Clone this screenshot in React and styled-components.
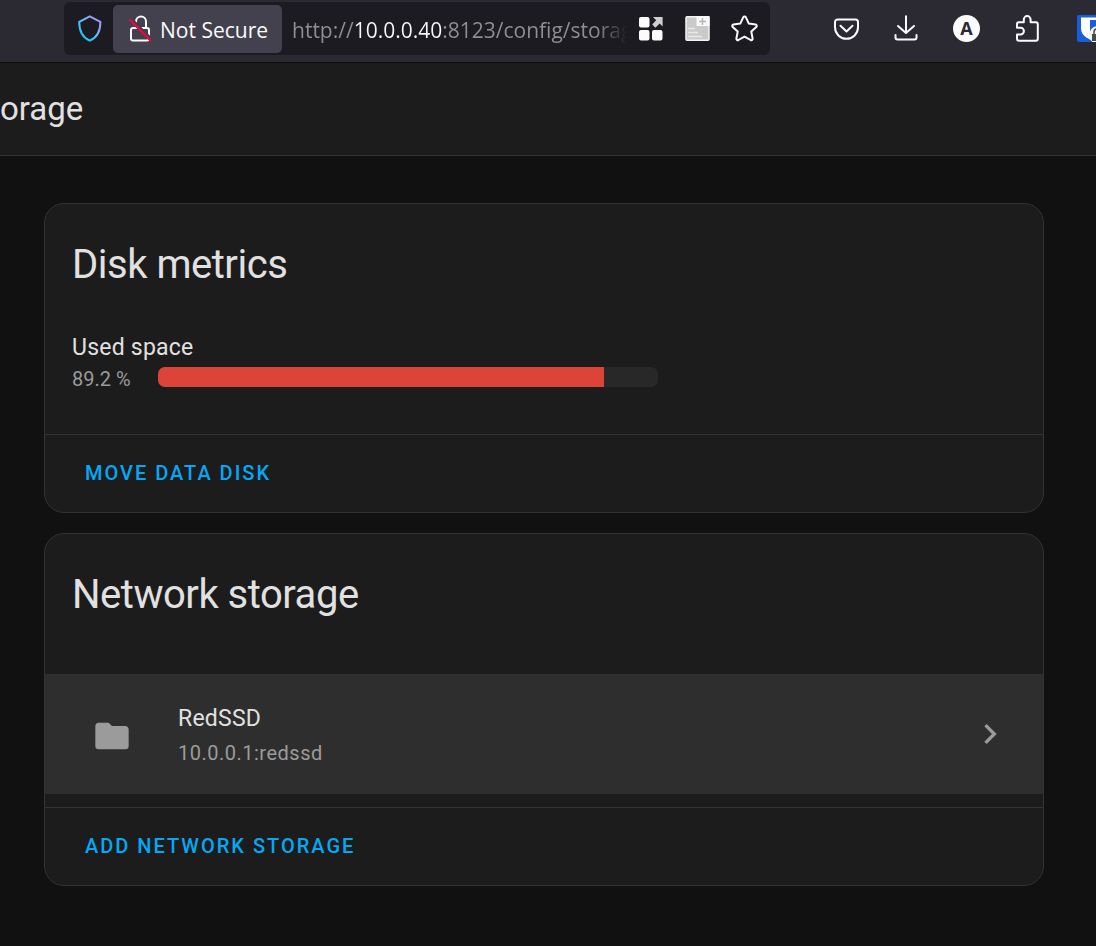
import React, { useState } from "react";
import styled, { createGlobalStyle } from "styled-components";

const GlobalStyle = createGlobalStyle`
  *, *::before, *::after { box-sizing: border-box; }
  body {
    margin: 0;
    background: #111111;
    color: #e1e1e1;
    font-family: Roboto, "Noto Sans", sans-serif;
    overflow-x: hidden;
  }
  button { border: 0; margin: 0; padding: 0; background: none; color: inherit; font: inherit; cursor: pointer; }
`;

const BrowserBar = styled.header`
  display: flex;
  height: 63px;
  padding: 2px 0 7px 64px;
  background: #2b2a33;
  border-bottom: 1px solid #0c0c0d;
  color: #fbfbfe;
  font-family: "Open Sans", "Noto Sans", sans-serif;
  font-size: 21px;
  overflow: hidden;
`;

const UrlBar = styled.div`
  display: flex;
  flex: 1;
  min-width: 0;
  align-items: center;
  padding-right: 12px;
  background: #1c1b22;
  border-radius: 6px;
`;

const IconButton = styled.button`
  display: flex;
  flex: none;
  svg { display: block; }
`;

const ShieldButton = styled(IconButton)`
  padding: 0 10px 0 12px;
`;

const IdentityButton = styled(IconButton)`
  align-items: center;
  gap: 7px;
  height: 48px;
  padding: 0 14px 0 13px;
  background: #42414d;
  border-radius: 5px;
  white-space: nowrap;
`;

const IdentityLabel = styled.span`
  padding-top: 2px;
`;

const UrlInput = styled.input`
  flex: 1;
  min-width: 0;
  height: 48px;
  margin: 0 10px;
  padding: 2px 0 0;
  border: 0;
  outline: 0;
  font: inherit;
  color: transparent;
  caret-color: #fbfbfe;
  background: linear-gradient(
    to right,
    #8f8f94 62px,
    #fbfbfe 62px,
    #fbfbfe 150px,
    #8f8f94 150px,
    #8f8f94 calc(100% - 30px),
    transparent
  );
  -webkit-background-clip: text;
  background-clip: text;
`;

const PageActions = styled.div`
  display: flex;
  gap: 20px;
`;

const Extensions = styled.nav`
  display: flex;
  flex: none;
  align-items: center;
  gap: 33px;
  padding-left: 63px;
`;

const AppHeader = styled.div`
  display: flex;
  align-items: center;
  height: 93px;
  background: #1c1c1c;
  border-bottom: 1px solid #333333;
`;

const PageTitle = styled.h1`
  margin: 0;
  font-size: 33px;
  line-height: 40px;
  font-weight: 400;
`;

const Content = styled.main`
  display: flex;
  flex-direction: column;
  align-items: center;
  gap: 20px;
  padding: 47px 52px 60px 44px;
`;

const Card = styled.section`
  width: 100%;
  max-width: 1000px;
  background: #1c1c1c;
  border: 1px solid #333333;
  border-radius: 20px;
  overflow: hidden;
`;

const CardTitle = styled.h2`
  margin: 0;
  padding: 21px 27px 0;
  font-size: 40px;
  line-height: 80px;
  font-weight: 400;
  letter-spacing: -0.012em;
`;

const Metric = styled.div`
  padding: 29px 27px 40px;
`;

const MetricLabel = styled.div`
  font-size: 23px;
  line-height: 28px;
  letter-spacing: 0.01em;
`;

const MetricRow = styled.div`
  display: flex;
  align-items: flex-start;
  gap: 27px;
  height: 32px;
`;

const MetricValue = styled.span`
  font-size: 20px;
  line-height: 34px;
  color: #9b9b9b;
`;

const Track = styled.div`
  flex: 0 1 500px;
  height: 20px;
  margin-top: 5px;
  background: #282828;
  border-radius: 7px;
  overflow: hidden;
`;

const Fill = styled.div`
  height: 100%;
  background: #db4437;
`;

const StorageList = styled.div`
  padding: 39px 0 13px;
`;

const StorageRow = styled.button`
  display: flex;
  align-items: center;
  width: 100%;
  height: 120px;
  padding: 0 33px 0 47px;
  background: #2e2e2e;
  text-align: left;
`;

const StorageMain = styled.span`
  display: flex;
  flex: 1;
  align-items: center;
  gap: 46px;
  padding-top: 4px;
`;

const StorageText = styled.span`
  display: flex;
  flex-direction: column;
`;

const StorageName = styled.span`
  font-size: 23px;
  line-height: 34px;
  letter-spacing: 0.01em;
`;

const StoragePath = styled.span`
  font-size: 20px;
  line-height: 34px;
  letter-spacing: 0.025em;
  color: #9b9b9b;
`;

const CardActions = styled.div`
  display: flex;
  align-items: flex-start;
  height: 78px;
  padding: 8px 27px;
  border-top: 1px solid #333333;
`;

const ActionButton = styled.button`
  height: 60px;
  padding: 0 13px;
  color: #03a9f4;
  font-size: 20px;
  font-weight: 500;
  letter-spacing: 2px;
  text-transform: uppercase;
`;

const Icon = ({ width = 27, children }) => (
  <svg
    width={width}
    height="27"
    viewBox={`0 0 ${width} 27`}
    fill="none"
    stroke="#fbfbfe"
    strokeWidth="2"
    strokeLinecap="round"
    strokeLinejoin="round"
    aria-hidden="true"
  >
    {children}
  </svg>
);

const ShieldIcon = () => (
  <Icon>
    <defs>
      <linearGradient id="shield" x1="4" y1="24" x2="24" y2="4" gradientUnits="userSpaceOnUse">
        <stop offset="0" stopColor="#00c8ff" />
        <stop offset="0.5" stopColor="#62c0fa" />
        <stop offset="1" stopColor="#b08cff" />
      </linearGradient>
    </defs>
    <path stroke="url(#shield)" d="M13.8 1.3 3.2 6.8c0 9 2.6 15.6 10.6 18.9 8-3.3 10.6-9.9 10.6-18.9z" />
  </Icon>
);

const LockIcon = () => (
  <Icon>
    <path d="M10 8V6.500a5 5 0 0 1 10 0V13" />
    <path d="M7 13h14a2 2 0 0 1 2 2v8.500a2 2 0 0 1-2 2H7a2 2 0 0 1-2-2V15a2 2 0 0 1 2-2z" />
    <path stroke="#42414d" strokeWidth="4" strokeLinecap="butt" d="M5 4.500 26 25.500" />
    <path stroke="#ff0039" d="m4 5 20.500 20.500" />
  </Icon>
);

const GridIcon = () => (
  <Icon>
    <g fill="#fbfbfe" stroke="none">
      <rect x="2" y="2" width="10.500" height="10.500" rx="2" />
      <rect x="2" y="15" width="10.500" height="10.500" rx="2" />
      <rect x="15" y="15" width="10.500" height="10.500" rx="2" />
      <path fill="#cfcfd2" d="M16 2h9.600v9.600l-3-3-4.200 4.200-3.200-3.200L19.200 5.200z" />
    </g>
  </Icon>
);

const ReaderIcon = () => (
  <Icon>
    <g strokeLinecap="butt">
      <rect x="2" y="1.700" width="23" height="23.600" rx="1" fill="#cacaca" stroke="#f4f4f4" strokeWidth="1.500" />
      <path stroke="none" fill="#f8f8f8" d="M12.500 1H25.500v10H12.500z" />
      <path stroke="#b5b5b5" strokeWidth="1.500" d="M18.500 3v7M15 6.500h7" />
      <path stroke="#e9e9e9" strokeWidth="1.500" d="M4 13.500h7M4 17.500h10M4 21.500h14" />
    </g>
  </Icon>
);

const StarIcon = () => (
  <Icon>
    <path d="M12.300 2.200a1.400 1.400 0 0 1 2.500 0l3 6.400 6.800.9a1.400 1.400 0 0 1 .7 2.400l-5 4.700 1.300 6.900a1.400 1.400 0 0 1-2 1.500l-6.100-3.400L7.400 25a1.400 1.400 0 0 1-2-1.500l1.300-6.900-5-4.700a1.400 1.400 0 0 1 .7-2.400l6.900-.9z" />
  </Icon>
);

const PocketIcon = () => (
  <Icon>
    <path d="M4.500 4.500h18a2.500 2.500 0 0 1 2.500 2.500v5.300a11.500 11.500 0 0 1-23 0V7a2.500 2.500 0 0 1 2.500-2.500z" />
    <path d="m7.500 10.800 6 5.700 6-5.700" />
  </Icon>
);

const DownloadIcon = () => (
  <Icon>
    <path d="M13 1.200v16.300M5 11l8 7 8-7M2.500 20v2.500a2 2 0 0 0 2 2h17a2 2 0 0 0 2-2V20" />
  </Icon>
);

const AccountIcon = () => (
  <Icon>
    <circle cx="13.500" cy="13.500" r="13.500" fill="#fbfbfe" stroke="none" />
    <text
      x="13.500"
      y="20"
      textAnchor="middle"
      fill="#2b2a33"
      stroke="none"
      fontFamily="Open Sans, Noto Sans, sans-serif"
      fontSize="18"
      fontWeight="700"
    >
      A
    </text>
  </Icon>
);

const PuzzleIcon = () => (
  <Icon>
    <path d="M4 11.500V9a1.800 1.800 0 0 1 1.800-1.800h5V4.500a3.400 3.400 0 0 1 6.800 0v2.700h5.200A2 2 0 0 1 24.800 9.200v14.600a2 2 0 0 1-2 2H6a2 2 0 0 1-2-2V19.500h3.500a3.400 3.400 0 0 0 0-6.800H4z" />
  </Icon>
);

const VaultIcon = () => (
  <Icon width={23}>
    <g stroke="none">
      <rect x="4" y="0" width="27" height="27" rx="2" fill="#175ddc" />
      <path fill="#fff" d="M8 2.500h19V13c0 6-5 9.500-9.500 12C12 22 8 19 8 13z" />
      <path fill="#175ddc" d="M17 5h8v9c0 4-3 6-8 8z" />
      <circle cx="25" cy="20" r="9" fill="#f3f3f3" />
      <path fill="none" stroke="#4a4a4a" strokeWidth="1.500" d="M21 20v-3a3 3 0 0 1 3-3" />
      <rect x="19" y="19" width="10" height="7" fill="#4a4a4a" />
    </g>
  </Icon>
);

const FolderIcon = () => (
  <svg width="40" height="40" viewBox="0 0 24 24" fill="#9b9b9b" aria-hidden="true">
    <path d="M10 4H4c-1.110 0-2 .89-2 2v12a2 2 0 0 0 2 2h16a2 2 0 0 0 2-2V8c0-1.110-.9-2-2-2h-8l-2-2z" />
  </svg>
);

const ChevronIcon = () => (
  <svg width="40" height="40" viewBox="0 0 24 24" fill="#9b9b9b" aria-hidden="true">
    <path d="M8.590 16.580 13.170 12 8.590 7.410 10 6l6 6-6 6z" />
  </svg>
);

const pageActions = [
  ["Open in container", GridIcon],
  ["Reader view", ReaderIcon],
  ["Bookmark this page", StarIcon],
];

const extensions = [
  ["Pocket", PocketIcon],
  ["Downloads", DownloadIcon],
  ["Account", AccountIcon],
  ["Extensions", PuzzleIcon],
  ["Vault", VaultIcon],
];

const usedPercent = 89.2;

export default function App() {
  const [url, setUrl] = useState("http://10.0.0.40:8123/config/storage");
  return (
    <>
      <GlobalStyle />
      <BrowserBar>
        <UrlBar>
          <ShieldButton aria-label="Tracking protection"><ShieldIcon /></ShieldButton>
          <IdentityButton>
            <LockIcon />
            <IdentityLabel>Not Secure</IdentityLabel>
          </IdentityButton>
          <UrlInput aria-label="Address" value={url} onChange={(e) => setUrl(e.target.value)} />
          <PageActions>
            {pageActions.map(([label, Glyph]) => (
              <IconButton key={label} aria-label={label}><Glyph /></IconButton>
            ))}
          </PageActions>
        </UrlBar>
        <Extensions>
          {extensions.map(([label, Glyph]) => (
            <IconButton key={label} aria-label={label}><Glyph /></IconButton>
          ))}
        </Extensions>
      </BrowserBar>
      <AppHeader>
        <PageTitle>orage</PageTitle>
      </AppHeader>
      <Content>
        <Card>
          <CardTitle>Disk metrics</CardTitle>
          <Metric>
            <MetricLabel id="used-space">Used space</MetricLabel>
            <MetricRow>
              <MetricValue>{usedPercent} %</MetricValue>
              <Track role="progressbar" aria-labelledby="used-space" aria-valuenow={usedPercent}>
                <Fill style={{ width: `${usedPercent}%` }} />
              </Track>
            </MetricRow>
          </Metric>
          <CardActions>
            <ActionButton>Move data disk</ActionButton>
          </CardActions>
        </Card>
        <Card>
          <CardTitle>Network storage</CardTitle>
          <StorageList>
            <StorageRow>
              <StorageMain>
                <FolderIcon />
                <StorageText>
                  <StorageName>RedSSD</StorageName>
                  <StoragePath>10.0.0.1:redssd</StoragePath>
                </StorageText>
              </StorageMain>
              <ChevronIcon />
            </StorageRow>
          </StorageList>
          <CardActions>
            <ActionButton>Add network storage</ActionButton>
          </CardActions>
        </Card>
      </Content>
    </>
  );
}
